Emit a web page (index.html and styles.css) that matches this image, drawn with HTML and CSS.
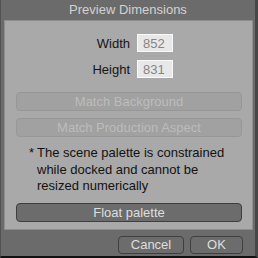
FILE: index.html
```html
<!DOCTYPE html>
<html lang="en">
<head>
  <meta charset="UTF-8" />
  <title>Preview Dimensions</title>
  <link rel="stylesheet" href="styles.css">
</head>
<body>
  <div class="dialog">
    <header class="title">Preview Dimensions</header>

    <section class="panel">
      <div class="field">
        <label for="width">Width</label>
        <input type="text" id="width" value="852" />
      </div>
      <div class="field">
        <label for="height">Height</label>
        <input type="text" id="height" value="831" />
      </div>

      <button class="btn wide" disabled>Match Background</button>
      <button class="btn wide" disabled>Match Production Aspect</button>

      <p class="note">
        <span class="star">*</span>
        <span class="text">The scene palette is constrained while docked and cannot be resized numerically</span>
      </p>

      <button class="btn wide dark">Float palette</button>
    </section>

    <footer class="actions">
      <button class="btn dark cancel">Cancel</button>
      <button class="btn dark ok">OK</button>
    </footer>
  </div>
</body>
</html>
```

FILE: styles.css
```css
* {
  box-sizing: border-box;
  margin: 0;
  padding: 0;
}

body {
  font-family: 'Liberation Sans', Arial, sans-serif;
  font-size: 13px;
  background: #6b6b6b;
  width: 258px;
  height: 258px;
  overflow: hidden;
}

.dialog {
  width: 258px;
  height: 258px;
  background: #6b6b6b;
  border-left: 1px solid #525252;
  border-right: 3px solid #474747;
  border-bottom: 2px solid #111;
  display: flex;
  flex-direction: column;
}

.title {
  height: 20px;
  line-height: 20px;
  text-align: center;
  color: #d2d2d2;
  font-size: 13px;
}

.panel {
  margin: 0 2px 0 3px;
  height: 210px;
  background: #a9a9a9;
  border: 1px solid #8d8d8d;
  padding: 13px 10px 0 11px;
  display: flex;
  flex-direction: column;
}

.field {
  display: flex;
  align-items: center;
  gap: 7px;
  height: 18px;
  margin-bottom: 8px;
  padding-left: 74px;
}

.field label {
  width: 40px;
  text-align: right;
  color: #151515;
  font-size: 13px;
}

.field input {
  width: 36px;
  height: 18px;
  background: #e8e8e8;
  border: 1px solid #f9f9f9;
  color: #858585;
  font-family: inherit;
  font-size: 13px;
  padding: 0 0 0 5px;
  outline: none;
}

.btn {
  font-family: inherit;
  font-size: 13px;
  border-radius: 4px;
  height: 19px;
  line-height: 17px;
  text-align: center;
}

.btn:disabled {
  background: #a1a1a1;
  border: 1px solid #979797;
  color: #bcbcbc;
}

.btn.dark {
  background: #6c6c6c;
  border: 1px solid #3f3f3f;
  color: #dedede;
}

.wide {
  width: 100%;
}

.panel .wide + .wide {
  margin-top: 7px;
}

.field + .wide {
  margin-top: 6px;
}

.note {
  display: flex;
  gap: 3px;
  margin: 8px 0 8px 13px;
  color: #121212;
  font-size: 13px;
  line-height: 16.5px;
}

.note .star {
  width: 5px;
}

.note .text {
  width: 198px;
}

.actions {
  display: flex;
  justify-content: flex-end;
  gap: 6px;
  padding: 6px 12px 0 0;
}

.actions .btn {
  height: 18px;
  line-height: 16px;
}

.cancel {
  width: 66px;
}

.ok {
  width: 53px;
}
```
